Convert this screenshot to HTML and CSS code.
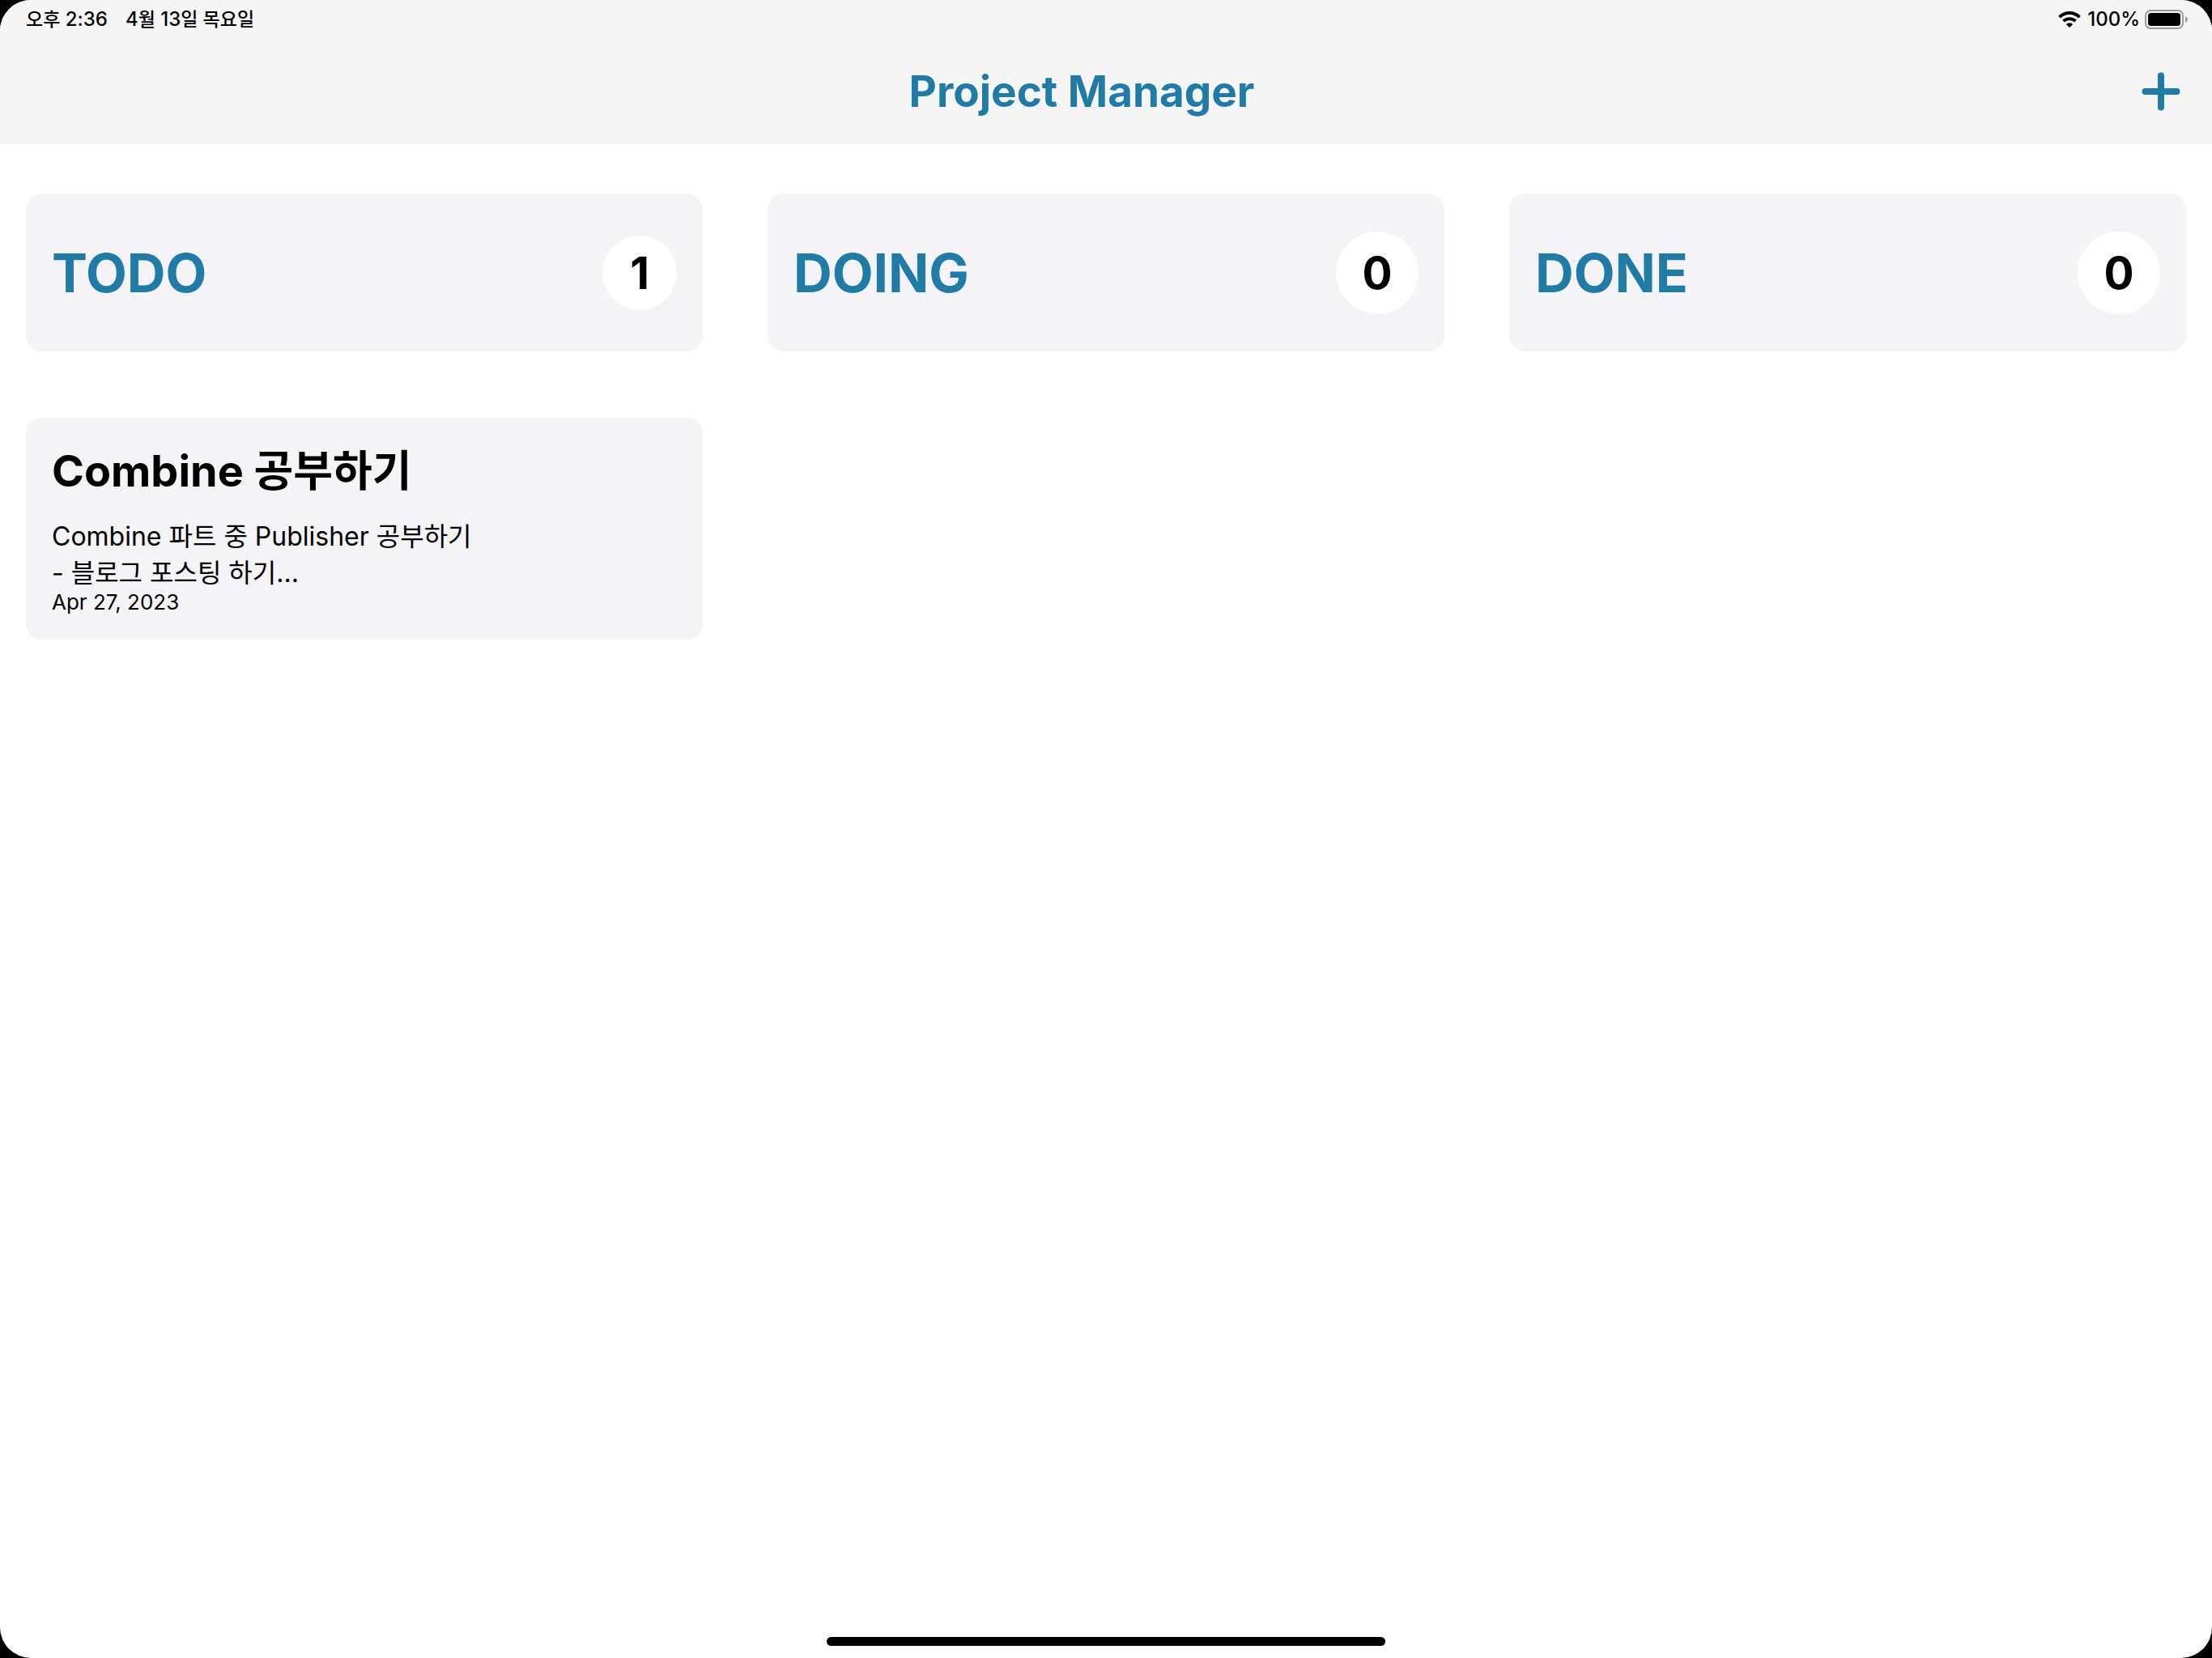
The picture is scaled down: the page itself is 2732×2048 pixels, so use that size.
FILE: index.html
```html
<!DOCTYPE html>
<html lang="ko">
<head>
<meta charset="utf-8">
<meta name="viewport" content="width=device-width, initial-scale=1">
<title>Project Manager</title>
<link rel="stylesheet" href="styles.css">
</head>
<body>
<div class="screen">
  <header class="top">
    <div class="status">
      <div class="status-group status-clock">
        <span><span class="ko">오후</span> 2:36</span>
        <span>4<span class="ko">월</span> 13<span class="ko">일 목요일</span></span>
      </div>
      <div class="status-group">
        <svg class="wifi" viewBox="0 0 28 20" aria-hidden="true">
          <path d="M1.600 7.200A17.500 17.500 0 0 1 26.400 7.200" fill="none" stroke="#000" stroke-width="4"/>
          <path d="M6.500 12.200A10.700 10.700 0 0 1 21.500 12.200" fill="none" stroke="#000" stroke-width="3.800"/>
          <path d="M14 20L9.800 15.900A6 6 0 0 1 18.200 15.900Z"/>
        </svg>
        <span>100%</span>
        <svg class="battery" viewBox="0 0 54 24" aria-hidden="true">
          <rect x="1" y="1" width="46" height="22" rx="6" fill="none" stroke="#9b9b9d" stroke-width="2"/>
          <rect x="4" y="4" width="40" height="16" rx="3.500"/>
          <path d="M50 8Q53 9.500 53 12T50 16Z" fill="#9b9b9d"/>
        </svg>
      </div>
    </div>
    <div class="navbar">
      <h1 class="navbar-title">Project Manager</h1>
      <button class="add" type="button" aria-label="Add project">
        <svg class="add-icon" viewBox="0 0 48 48" aria-hidden="true">
          <path d="M24 4.500V43.500M4.500 24H43.500" stroke="currentColor" stroke-width="8" stroke-linecap="round"/>
        </svg>
      </button>
    </div>
  </header>

  <main class="board">
    <section class="column">
      <div class="column-head">
        <h2 class="column-title">TODO</h2>
        <span class="count count-narrow">1</span>
      </div>
      <article class="task">
        <h3 class="task-title">Combine <span class="ko">공부하기</span></h3>
        <p class="task-body">Combine <span class="ko">파트 중</span> Publisher <span class="ko">공부하기</span><br>- <span class="ko">블로그 포스팅 하기</span>...</p>
        <time class="task-date" datetime="2023-04-27">Apr 27, 2023</time>
      </article>
    </section>
    <section class="column">
      <div class="column-head">
        <h2 class="column-title">DOING</h2>
        <span class="count">0</span>
      </div>
    </section>
    <section class="column">
      <div class="column-head">
        <h2 class="column-title">DONE</h2>
        <span class="count">0</span>
      </div>
    </section>
  </main>
  <div class="home-indicator"></div>
</div>
</body>
</html>
```
FILE: styles.css
```css
* { box-sizing: border-box; }

body {
  margin: 0;
  background: #000;
  color: #000;
  font-family: Inter, "Noto Sans CJK KR", sans-serif;
}

h1, h2, h3, p { margin: 0; }

.screen {
  display: flex;
  flex-direction: column;
  min-height: 100vh;
  overflow: hidden;
  background: #fff;
  border-radius: 38px;
}

.top { background: #f5f5f5; }

.status {
  display: flex;
  justify-content: space-between;
  align-items: center;
  height: 48px;
  padding: 0 29px 0 32px;
  font-size: 24px;
  font-weight: 500;
  line-height: 48px;
}

.status .ko { font-size: 23px; }

.status-group {
  display: flex;
  align-items: center;
  gap: 6px;
}

.status-clock { gap: 22px; }

.wifi {
  width: 28px;
  height: 20px;
  margin-right: 2px;
}

.battery {
  width: 54px;
  height: 24px;
}

.navbar {
  display: flex;
  align-items: center;
  height: 130px;
  padding: 0 33px;
}

.navbar-title {
  flex: 1;
  color: #207ba6;
  font-size: 53px;
  font-weight: 700;
  line-height: 64px;
  text-align: center;
}

.add {
  display: flex;
  justify-content: center;
  width: 60px;
  padding: 0;
  border: 0;
  background: none;
  color: #207ba6;
}

.add-icon {
  width: 48px;
  height: 48px;
}

.board {
  display: grid;
  flex: 1;
  grid-template-columns: repeat(3, 1fr);
  gap: 80px;
  padding: 61px 32px;
}

.column {
  display: flex;
  flex-direction: column;
  gap: 82px;
}

.column-head {
  display: flex;
  justify-content: space-between;
  align-items: center;
  height: 195px;
  padding: 0 32px;
  background: #f3f3f8;
  border-radius: 20px;
}

.column-title {
  color: #207ba6;
  font-size: 66px;
  font-weight: 700;
  line-height: 80px;
}

.count {
  width: 102px;
  height: 102px;
  border-radius: 50%;
  background: #fff;
  font-size: 55px;
  font-weight: 700;
  line-height: 102px;
  text-align: center;
}

.count-narrow {
  width: 92px;
  height: 92px;
  line-height: 92px;
}

.task {
  padding: 32px;
  background: #f3f3f8;
  border-radius: 20px;
}

.task-title {
  font-size: 54px;
  font-weight: 700;
  line-height: 68px;
}

.task-title .ko { font-size: 53px; }

.task-body {
  margin-top: 24px;
  font-size: 32px;
  line-height: 45px;
}

.task-date {
  display: block;
  font-size: 26px;
  line-height: 28px;
}

.home-indicator {
  align-self: center;
  width: 690px;
  max-width: 50%;
  height: 11px;
  margin-bottom: 15px;
  border-radius: 6px;
  background: #000;
}
```
